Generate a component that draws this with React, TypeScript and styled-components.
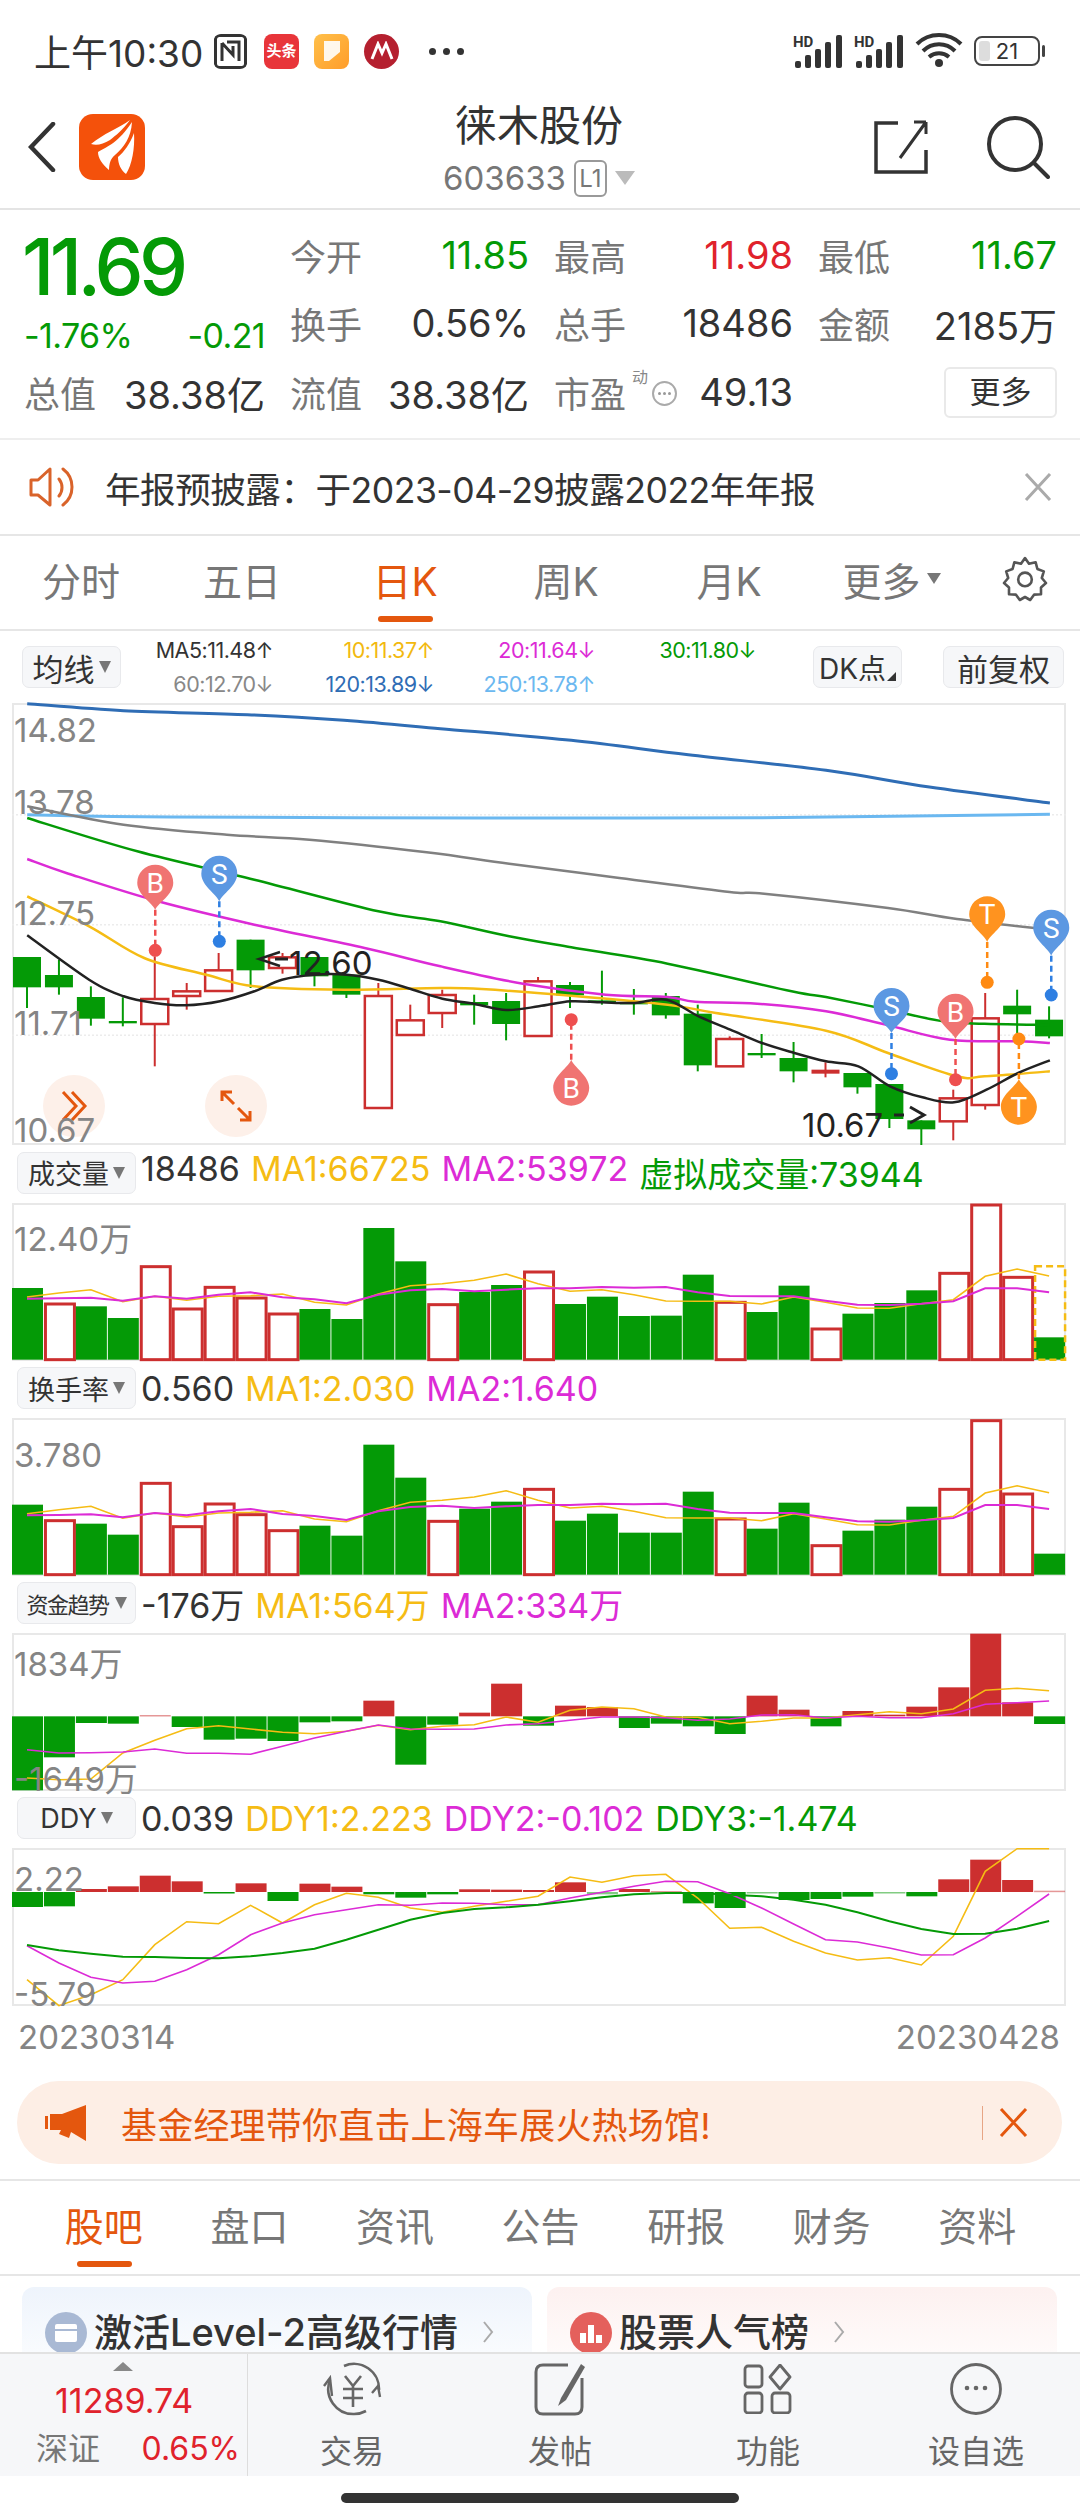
import React from "react";
import styled, { createGlobalStyle } from "styled-components";

const GREEN = "#049a06";
const RED = "#cc2f2f";
const YELLOW = "#f5bc14";
const MAGENTA = "#dc2bd6";
const ORANGE = "#e4570e";
const FONT = `Inter, "Noto Sans CJK SC", sans-serif`;

const GlobalStyle = createGlobalStyle`
  html, body { margin: 0; padding: 0; background: #fff; }
  * { box-sizing: border-box; }
  body { font-family: ${FONT}; color: #333; }
`;

const Page = styled.div`
  width: 1080px;
  height: 2520px;
  overflow: hidden;
  background: #fff;
`;

/* status bar */
const StatusBar = styled.div`
  height: 100px;
  padding: 2px 40px 0 34px;
  display: flex;
  align-items: center;
  justify-content: space-between;
`;
const StatusLeft = styled.div`
  display: flex;
  align-items: center;
`;
const Clock = styled.span`
  font-size: 37px;
  color: #333;
  width: 179px;
  white-space: nowrap;
`;
const AppBadge = styled.div<{ $bg: string; $round?: boolean; $gap?: number }>`
  width: 35px;
  height: 35px;
  margin-right: ${(p) => p.$gap ?? 15}px;
  border-radius: ${(p) => (p.$round ? "50%" : "8px")};
  background: ${(p) => p.$bg};
  color: #fff;
  display: flex;
  align-items: center;
  justify-content: center;
  font-size: 15px;
  font-weight: 700;
  line-height: 14px;
  text-align: center;
  overflow: hidden;
`;
const StatusDots = styled.span`
  display: flex;
  gap: 7px;
  margin-left: 15px;
  i {
    width: 7px;
    height: 7px;
    border-radius: 50%;
    background: #333;
  }
`;
const StatusRight = styled.div`
  display: flex;
  align-items: center;
  gap: 11px;
`;
const Battery = styled.div`
  width: 66px;
  height: 30px;
  border: 2px solid #444;
  border-radius: 8px;
  font-size: 22px;
  line-height: 26px;
  text-align: center;
  color: #333;
  position: relative;
  &::before {
    content: "";
    position: absolute;
    left: 3px;
    top: 3px;
    bottom: 3px;
    width: 11px;
    border-radius: 3px;
    background: #ddd;
  }
  &::after {
    content: "";
    position: absolute;
    right: -7px;
    top: 7px;
    width: 3px;
    height: 12px;
    border-radius: 2px;
    background: #444;
  }
`;

/* header */
const Header = styled.div`
  height: 110px;
  border-bottom: 2px solid #e4e4e4;
  display: grid;
  grid-template-columns: 1fr auto 1fr;
  padding: 0 30px 0 28px;
`;
const HeaderLeft = styled.div`
  display: flex;
  align-items: center;
  gap: 23px;
  padding-bottom: 14px;
`;
const AppLogo = styled.div`
  width: 66px;
  height: 66px;
  border-radius: 14px;
  background: #f4510b;
  display: flex;
  align-items: center;
  justify-content: center;
`;
const HeaderCenter = styled.div`
  text-align: center;
`;
const Title = styled.div`
  font-size: 42px;
  line-height: 52px;
  color: #333;
`;
const CodeRow = styled.div`
  height: 52px;
  display: flex;
  align-items: center;
  justify-content: center;
  font-size: 33px;
  color: #777;
`;
const LevelTag = styled.span`
  width: 33px;
  height: 37px;
  margin: 0 8px 0 8px;
  border: 2px solid #999;
  border-radius: 6px;
  font-size: 24px;
  line-height: 33px;
  text-align: center;
  color: #777;
`;
const HeaderRight = styled.div`
  display: flex;
  align-items: center;
  justify-content: flex-end;
  gap: 58px;
  padding-bottom: 14px;
`;
const Caret = styled.span<{ $w?: number; $h?: number; $c?: string }>`
  display: inline-block;
  flex: none;
  border-left: ${(p) => p.$w ?? 9}px solid transparent;
  border-right: ${(p) => p.$w ?? 9}px solid transparent;
  border-top: ${(p) => p.$h ?? 13}px solid ${(p) => p.$c ?? "#bbb"};
`;

/* quote */
const Quote = styled.div`
  height: 230px;
  padding: 11px 24px 0 24px;
  border-bottom: 2px solid #eee;
  display: grid;
  grid-template-columns: 241px 239px 239px 239px;
  grid-template-rows: 68px 68px 70px;
  column-gap: 25px;
`;
const PriceBlock = styled.div`
  grid-row: 1 / span 2;
  display: flex;
  flex-direction: column;
`;
const Price = styled.div`
  height: 92px;
  font-size: 78px;
  line-height: 92px;
  font-weight: 500;
  letter-spacing: -4.6px;
  margin-left: -2px;
  color: ${GREEN};
`;
const Changes = styled.div`
  display: flex;
  justify-content: space-between;
  font-size: 34px;
  line-height: 46px;
  color: ${GREEN};
  letter-spacing: -0.6px;
`;
const Stat = styled.div<{ $row?: number }>`
  display: flex;
  align-items: center;
  justify-content: space-between;
  font-size: 36px;
  grid-row: ${(p) => p.$row ?? "auto"};
`;
const StatLabel = styled.span`
  color: #777;
  display: flex;
  align-items: center;
  position: relative;
`;
const StatValue = styled.span<{ $c?: string }>`
  font-size: 38px;
  color: ${(p) => p.$c ?? "#333"};
`;
const Sup = styled.span`
  position: absolute;
  left: 78px;
  top: -2px;
  font-size: 16px;
  color: #888;
`;
const MoreDots = styled.span`
  position: absolute;
  left: 98px;
  top: 15px;
  width: 25px;
  height: 25px;
  border: 2px solid #aaa;
  border-radius: 50%;
  display: flex;
  align-items: center;
  justify-content: center;
  gap: 2px;
  i {
    width: 3px;
    height: 3px;
    border-radius: 50%;
    background: #999;
  }
`;
const MoreButton = styled.div`
  justify-self: end;
  align-self: center;
  width: 113px;
  height: 51px;
  border: 2px solid #e9e9e9;
  border-radius: 6px;
  font-size: 31px;
  line-height: 46px;
  text-align: center;
  color: #333;
`;

/* notice */
const Notice = styled.div`
  height: 96px;
  padding: 0 28px 0 29px;
  border-bottom: 2px solid #e6e6e6;
  display: flex;
  align-items: center;
`;
const NoticeText = styled.div`
  flex: 1;
  margin-left: 30px;
  font-size: 35.6px;
  letter-spacing: -0.5px;
  color: #333;
`;

/* tabs */
const Tabs = styled.div`
  height: 95px;
  border-bottom: 2px solid #e6e6e6;
  display: flex;
  align-items: stretch;
`;
const Tab = styled.div<{ $active?: boolean; $w: number }>`
  flex: none;
  width: ${(p) => p.$w}px;
  position: relative;
  display: flex;
  align-items: center;
  justify-content: center;
  gap: 6px;
  padding-bottom: 8px;
  font-size: 39px;
  color: ${(p) => (p.$active ? ORANGE : "#777")};
  &::after {
    content: "";
    display: ${(p) => (p.$active ? "block" : "none")};
    position: absolute;
    left: 50%;
    bottom: 7px;
    width: 55px;
    height: 6px;
    margin-left: -27px;
    border-radius: 3px;
    background: ${ORANGE};
  }
`;
const TabIcon = styled.div`
  flex: 1;
  display: flex;
  align-items: center;
  justify-content: center;
  padding-bottom: 8px;
`;

/* ma legend */
const MaRow = styled.div`
  height: 72px;
  padding: 0 16px 0 22px;
  display: flex;
  align-items: center;
`;
const ToolPill = styled.div<{ $w: number; $h?: number; $fs?: number; $pr?: number }>`
  flex: none;
  position: relative;
  width: ${(p) => p.$w}px;
  height: ${(p) => p.$h ?? 42}px;
  padding-right: ${(p) => p.$pr ?? 0}px;
  background: #f6f7f9;
  border: 1px solid #e8e9ec;
  border-radius: 7px;
  display: flex;
  align-items: center;
  justify-content: center;
  gap: 4px;
  font-size: ${(p) => p.$fs ?? 27}px;
  color: #333;
`;
const CornerMark = styled.span`
  position: absolute;
  right: 5px;
  bottom: 6px;
  border-left: 9px solid transparent;
  border-bottom: 9px solid #333;
`;
const TightLabel = styled.span`
  font-size: 22px;
  letter-spacing: -1.5px;
  margin-right: 2px;
`;
const MaGrid = styled.div`
  width: 640px;
  margin-left: -9px;
  display: grid;
  grid-template-columns: repeat(4, 161px);
  row-gap: 5px;
`;
const MaItem = styled.span<{ $c: string }>`
  text-align: right;
  font-size: 21.5px;
  line-height: 29px;
  letter-spacing: -0.5px;
  white-space: nowrap;
  color: ${(p) => p.$c};
`;
const MaTools = styled.div`
  margin-left: auto;
  display: flex;
  gap: 41px;
`;

/* charts */
const ChartFrame = styled.div<{ $h: number }>`
  position: relative;
  height: ${(p) => p.$h}px;
  margin: 0 14px 0 12px;
  border: 2px solid #e8e8e8;
`;
const ChartSvg = styled.svg`
  position: absolute;
  left: -2px;
  top: -2px;
  overflow: visible;
`;
const AxisLabel = styled.span<{ $top: number }>`
  position: absolute;
  left: 0;
  top: ${(p) => p.$top}px;
  font-size: 33px;
  line-height: 40px;
  color: #858585;
  white-space: nowrap;
`;
const PriceTag = styled.span<{ $left: number; $top: number }>`
  position: absolute;
  left: ${(p) => p.$left}px;
  top: ${(p) => p.$top}px;
  font-size: 33px;
  line-height: 40px;
  color: #222;
`;
const RoundButton = styled.div<{ $left: number }>`
  position: absolute;
  left: ${(p) => p.$left}px;
  top: 370px;
  width: 62px;
  height: 62px;
  border-radius: 50%;
  background: #fdf0e9;
  display: flex;
  align-items: center;
  justify-content: center;
`;
const PaneHead = styled.div<{ $h: number }>`
  height: ${(p) => p.$h}px;
  padding: 0 0 3px 17px;
  display: flex;
  align-items: center;
  font-size: 34px;
  white-space: nowrap;
`;
const PaneValues = styled.div`
  display: flex;
  gap: 11px;
  margin-left: 5px;
`;
const PaneValue = styled.span<{ $c: string }>`
  color: ${(p) => p.$c};
`;
const Dates = styled.div`
  height: 60px;
  padding: 2px 20px 0 18px;
  display: flex;
  align-items: center;
  justify-content: space-between;
  font-size: 33px;
  color: #858585;
`;

/* promo banner */
const BannerWrap = styled.div`
  height: 115px;
  padding: 15px 18px 0 17px;
  border-bottom: 2px solid #e6e6e6;
`;
const Banner = styled.div`
  height: 83px;
  border-radius: 42px;
  background: #fdeee5;
  padding: 0 34px 0 28px;
  display: flex;
  align-items: center;
  color: ${ORANGE};
`;
const BannerText = styled.div`
  flex: 1;
  margin-left: 34px;
  font-size: 36px;
  letter-spacing: 0.2px;
`;
const BannerDivider = styled.span`
  width: 1px;
  height: 34px;
  margin-right: 16px;
  background: #e7a585;
`;

/* lower tabs */
const NewsTabs = styled.div`
  height: 95px;
  padding: 0 31px;
  border-bottom: 2px solid #e6e6e6;
  display: grid;
  grid-template-columns: repeat(7, 145.6px);
`;
const Cards = styled.div`
  height: 76px;
  padding: 11px 23px 0 22px;
  display: grid;
  grid-template-columns: 510px 510px;
  column-gap: 15px;
  overflow: hidden;
`;
const Card = styled.div<{ $from: string }>`
  height: 100px;
  padding: 25px 0 0 23px;
  border-radius: 12px 12px 0 0;
  background: linear-gradient(${(p) => p.$from}, #fff);
  display: flex;
  align-items: flex-start;
  align-self: start;
  font-size: 38px;
  line-height: 40px;
  font-weight: 500;
  color: #333;
  white-space: nowrap;
`;
const CardIcon = styled.div<{ $c: string }>`
  width: 42px;
  height: 42px;
  margin-right: 7px;
  border-radius: 50%;
  background: ${(p) => p.$c};
  display: flex;
  align-items: center;
  justify-content: center;
`;
const CardChevron = styled.span`
  margin: 9px 0 0 24px;
  display: flex;
`;

/* bottom bar */
const BottomBar = styled.div`
  height: 124px;
  border-top: 2px solid #e2e2e2;
  background: #f6f7f9;
  display: grid;
  grid-template-columns: 248px repeat(4, 1fr);
`;
const IndexCell = styled.div`
  border-right: 1px solid #ddd;
  padding: 8px 7px 0 36px;
  display: flex;
  flex-direction: column;
`;
const IndexCaret = styled.span`
  align-self: center;
  margin: 0 0 0 -30px;
  border-left: 10px solid transparent;
  border-right: 10px solid transparent;
  border-bottom: 9px solid #888;
`;
const IndexPrice = styled.span`
  margin-top: 8px;
  padding-left: 19px;
  font-size: 34px;
  line-height: 44px;
  white-space: nowrap;
  color: #e0222c;
`;
const IndexFoot = styled.div`
  margin-top: 4px;
  display: flex;
  justify-content: space-between;
  font-size: 32px;
  line-height: 44px;
  color: #777;
  span:last-child {
    color: #e0222c;
  }
`;
const NavItem = styled.div`
  padding-top: 7px;
  display: flex;
  flex-direction: column;
  align-items: center;
  font-size: 32px;
  color: #666;
`;
const NavIcon = styled.div`
  height: 56px;
  display: flex;
  align-items: center;
  margin-bottom: 9px;
`;
const HomeArea = styled.div`
  height: 44px;
  display: flex;
  align-items: center;
  justify-content: center;
`;
const HomeIndicator = styled.div`
  width: 398px;
  height: 10px;
  border-radius: 5px;
  background: #333;
`;

// zoom-crop coordinates read off the reference -> chart pixels
const zx = (x: number) => (x - 18) / 1.452;
const zy = (y: number, top: number) => (y - top) / 3;
const barX = (i: number) => i * 31.94;
const midX = (i: number) => 15 + i * 31.94;

const smoothPath = (pts: number[][]) => {
  let d = `M${pts[0][0].toFixed(1)} ${pts[0][1].toFixed(1)}`;
  for (let i = 0; i < pts.length - 1; i++) {
    const p0 = pts[Math.max(0, i - 1)];
    const p1 = pts[i];
    const p2 = pts[i + 1];
    const p3 = pts[Math.min(pts.length - 1, i + 2)];
    const c1x = p1[0] + (p2[0] - p0[0]) / 6;
    const c1y = p1[1] + (p2[1] - p0[1]) / 6;
    const c2x = p2[0] - (p3[0] - p1[0]) / 6;
    const c2y = p2[1] - (p3[1] - p1[1]) / 6;
    d += ` C${c1x.toFixed(1)} ${c1y.toFixed(1)} ${c2x.toFixed(1)} ${c2y.toFixed(1)} ${p2[0].toFixed(1)} ${p2[1].toFixed(1)}`;
  }
  return d;
};

const MAIN_TOP = 10;
const mainLines: { c: string; w: number; pts: number[][] }[] = [
  { c: "#2f6db5", w: 3, pts: [[40, 12], [180, 33], [360, 45], [500, 62], [640, 87], [830, 122], [1000, 165], [1200, 212], [1350, 262], [1525, 310]] },
  { c: "#6bb8f0", w: 3, pts: [[40, 345], [250, 352], [700, 355], [1100, 354], [1525, 344]] },
  { c: "#808080", w: 2.5, pts: [[40, 320], [180, 375], [330, 405], [450, 420], [620, 458], [740, 492], [900, 535], [1060, 577], [1110, 582], [1290, 625], [1390, 658], [1525, 690]] },
  { c: GREEN, w: 2.5, pts: [[40, 355], [200, 455], [370, 540], [550, 635], [640, 665], [740, 710], [830, 743], [970, 792], [1150, 875], [1200, 892], [1290, 930], [1370, 965], [1430, 972], [1525, 976]] },
  { c: MAGENTA, w: 2.5, pts: [[40, 478], [100, 522], [230, 605], [370, 675], [530, 745], [640, 800], [760, 852], [880, 885], [970, 892], [1010, 906], [1100, 912], [1200, 935], [1290, 977], [1380, 1020], [1480, 1025], [1525, 1030]] },
  { c: YELLOW, w: 2.5, pts: [[40, 590], [130, 680], [210, 775], [300, 825], [370, 860], [500, 870], [640, 865], [700, 868], [830, 888], [970, 915], [1040, 940], [1200, 993], [1290, 1060], [1390, 1130], [1430, 1130], [1525, 1115]] },
  { c: "#222", w: 2.5, pts: [[40, 707], [130, 840], [180, 890], [225, 910], [270, 917], [320, 905], [370, 875], [410, 840], [458, 825], [504, 825], [550, 840], [597, 868], [643, 897], [690, 913], [736, 931], [783, 920], [829, 905], [875, 908], [922, 910], [968, 900], [1015, 950], [1061, 990], [1107, 1030], [1154, 1060], [1200, 1085], [1247, 1100], [1293, 1160], [1340, 1193], [1386, 1208], [1433, 1170], [1479, 1120], [1525, 1082]] },
];

// [up, box top, box bottom, wick top, wick bottom, solid]
const candles: [number, number, number, number, number, number?][] = [
  [0, 772, 863, 772, 925], [0, 826, 863, 780, 885], [0, 892, 957, 860, 978], [0, 964, 971, 893, 980],
  [1, 898, 973, 770, 1100], [1, 875, 889, 850, 930], [1, 812, 874, 760, 875], [0, 720, 812, 720, 865],
  [1, 773, 805, 760, 822], [0, 772, 830, 772, 860], [0, 825, 885, 825, 895], [1, 889, 1225, 850, 1225],
  [1, 962, 1006, 915, 1006], [1, 886, 940, 870, 985], [0, 907, 917, 885, 975], [0, 904, 973, 880, 1022],
  [1, 845, 1009, 832, 1009], [0, 856, 887, 847, 925], [0, 902, 910, 813, 915], [0, 908, 914, 868, 945],
  [0, 889, 947, 880, 957], [0, 942, 1097, 915, 1115], [1, 1018, 1100, 1010, 1100], [0, 1060, 1067, 1003, 1075],
  [0, 1075, 1115, 1027, 1148], [1, 1110, 1122, 1088, 1133, 1], [0, 1120, 1163, 1120, 1182], [0, 1153, 1258, 1153, 1285],
  [0, 1262, 1289, 1262, 1336], [1, 1196, 1265, 1170, 1322], [1, 956, 1216, 880, 1230], [0, 918, 944, 870, 1010],
  [0, 960, 1010, 920, 1016],
];

const PIN_COLORS: Record<string, [string, string]> = {
  B: ["#f07472", "#ee4f4f"],
  S: ["#5c98e2", "#2e7fe2"],
  T: ["#ff931f", "#ff8a12"],
};
// [letter, x, head top, tip, dot, points down]
const pins: [string, number, number, number, number, boolean][] = [
  ["B", 226, 495, 630, 752, true],
  ["S", 319, 468, 605, 725, true],
  ["B", 830, 1218, 1080, 960, false],
  ["S", 1295, 865, 1000, 1122, true],
  ["B", 1388, 882, 1018, 1140, true],
  ["T", 1434, 590, 727, 848, true],
  ["S", 1527, 630, 768, 886, true],
  ["T", 1480, 1275, 1138, 1018, false],
];

const Pin = ({ pin }: { pin: (typeof pins)[number] }) => {
  const [letter, x0, head, tip, dot, down] = pin;
  const [fill, dotFill] = PIN_COLORS[letter];
  const x = zx(x0);
  const tipY = zy(tip, MAIN_TOP);
  const dotY = zy(dot, MAIN_TOP);
  const cy = down ? zy(head, MAIN_TOP) + 18 : zy(head, MAIN_TOP) - 18;
  const s = down ? 1 : -1;
  return (
    <g>
      <line x1={x} x2={x} y1={tipY} y2={dotY} stroke={dotFill} strokeWidth={2.5} strokeDasharray="6 4" />
      <circle cx={x} cy={dotY} r={6.5} fill={dotFill} />
      <path
        d={`M${x} ${tipY} C${x - 3} ${cy + s * 20} ${x - 18} ${cy + s * 12} ${x - 18} ${cy} A18 18 0 0 ${down ? 1 : 0} ${x + 18} ${cy} C${x + 18} ${cy + s * 12} ${x + 3} ${cy + s * 20} ${x} ${tipY}Z`}
        fill={fill}
      />
      <text x={x} y={cy + 10} textAnchor="middle" fontSize={28} fontFamily="Roboto, sans-serif" fontWeight={400} fill="#fff">
        {letter}
      </text>
    </g>
  );
};

const MainChart = () => (
  <ChartSvg width={1054} height={442}>
    {[345, 675, 1007].map((y) => (
      <line key={y} x1={0} x2={1054} y1={zy(y, MAIN_TOP)} y2={zy(y, MAIN_TOP)} stroke="#ececec" strokeWidth={1.5} strokeDasharray="2 2" />
    ))}
    {candles.map(([up, t, b, wt, wb, solid], i) => {
      const c = up ? RED : GREEN;
      const x = midX(i);
      const top = zy(t, MAIN_TOP);
      const bot = zy(b, MAIN_TOP);
      return (
        <g key={i}>
          <line x1={x} x2={x} y1={zy(wt, MAIN_TOP)} y2={zy(wb, MAIN_TOP)} stroke={c} strokeWidth={2} />
          {up && !solid ? (
            <rect x={x - 13.5} y={top} width={27} height={bot - top} fill="#fff" stroke={c} strokeWidth={2.5} />
          ) : (
            <rect x={x - 14} y={top} width={28} height={bot - top} fill={c} />
          )}
        </g>
      );
    })}
    {mainLines.map((l) => (
      <path
        key={l.c}
        d={smoothPath(l.pts.map(([x, y]) => [zx(x), zy(y, MAIN_TOP)]))}
        fill="none"
        stroke={l.c}
        strokeWidth={l.w}
      />
    ))}
    {pins.map((p) => (
      <Pin key={`${p[0]}${p[1]}`} pin={p} />
    ))}
    <path d="M268 249 L247 256 L268 263" fill="none" stroke="#222" strokeWidth={2.5} />
    <path d="M263 256 H276" stroke="#222" strokeWidth={3} />
    <path d="M882 412 H892 M898 404 L912 412 L898 420" fill="none" stroke="#222" strokeWidth={3} />
  </ChartSvg>
);

const volTops: [number, number][] = [
  [0, 385], [1, 430], [0, 440], [0, 475], [1, 318], [1, 445], [1, 380], [1, 412], [1, 460], [0, 448], [0, 478],
  [0, 205], [0, 305], [1, 432], [0, 397], [0, 376], [1, 334], [0, 433], [0, 411], [0, 469], [0, 468], [0, 345],
  [1, 425], [0, 457], [0, 378], [1, 505], [0, 462], [0, 430], [0, 392], [1, 338], [1, 133], [1, 350], [0, 533],
];
const turnoverTops = [
  1035, 1080, 1092, 1125, 968, 1098, 1030, 1062, 1110, 1098, 1128, 855, 954, 1082, 1047, 1026, 986, 1083, 1062,
  1119, 1119, 996, 1075, 1107, 1029, 1155, 1113, 1080, 1041, 986, 780, 1000, 1182,
];
const volMa1 = [412, 400, 390, 426, 410, 422, 410, 408, 403, 428, 436, 403, 378, 372, 362, 343, 372, 395, 390, 405, 424, 425, 425, 433, 412, 428, 445, 446, 432, 420, 350, 328, 349];
const volMa2 = [417, 416, 414, 423, 410, 417, 405, 398, 413, 419, 431, 405, 392, 388, 395, 390, 386, 386, 382, 384, 382, 398, 409, 410, 410, 423, 435, 436, 432, 425, 386, 386, 398];

// signed bars: far end as crop y
const flowEnds = [
  602, 503, 400, 402, 376, 412, 450, 447, 454, 398, 395, 333, 525, 405, 369, 282, 408, 348, 352, 415, 402, 410,
  433, 318, 360, 410, 364, 375, 351, 293, 132, 338, 403,
];
const flowMa1 = [565, 570, 568, 490, 452, 417, 408, 418, 428, 432, 425, 407, 420, 410, 405, 382, 398, 362, 352, 357, 382, 383, 402, 395, 385, 385, 375, 366, 372, 358, 302, 296, 303];
const flowMa2 = [480, 490, 489, 487, 478, 491, 491, 494, 470, 445, 425, 406, 418, 419, 418, 406, 402, 392, 382, 382, 384, 392, 388, 376, 375, 385, 380, 384, 384, 372, 344, 339, 334];

const ddyEnds = [
  952, 950, 898, 890, 858, 875, 911, 881, 934, 882, 891, 914, 924, 914, 899, 900, 901, 878, 914, 898, 904, 941,
  955, 910, 931, 928, 921, 910, 920, 869, 810, 871, 903,
];
const ddy1 = [1170, 1248, 1215, 1170, 1065, 996, 1002, 947, 1000, 945, 911, 923, 955, 968, 950, 935, 920, 862, 878, 858, 854, 925, 1016, 1013, 1055, 1090, 1111, 1104, 1126, 1040, 845, 777, 777];
const ddy2 = [1068, 1120, 1163, 1180, 1175, 1140, 1095, 1035, 1000, 975, 960, 945, 947, 940, 941, 945, 945, 925, 908, 890, 875, 876, 912, 955, 1003, 1050, 1057, 1075, 1096, 1095, 1045, 980, 913];
const ddy3 = [1066, 1082, 1092, 1101, 1102, 1105, 1106, 1100, 1090, 1077, 1050, 1020, 990, 970, 958, 953, 945, 935, 923, 914, 910, 910, 915, 920, 930, 945, 968, 995, 1018, 1033, 1032, 1017, 994];

const SubLine = ({ ys, top, c, w = 1.6 }: { ys: number[]; top: number; c: string; w?: number }) => (
  <polyline
    points={ys.map((y, i) => `${midX(i).toFixed(1)},${zy(y, top).toFixed(1)}`).join(" ")}
    fill="none"
    stroke={c}
    strokeWidth={w}
  />
);

const VolumeChart = ({ tops, top, bottom, shift, ghost }: { tops: number[]; top: number; bottom: number; shift: number; ghost?: boolean }) => (
  <ChartSvg width={1054} height={158}>
    {tops.map((t, i) => {
      const y = zy(t, top);
      const b = zy(bottom, top);
      return volTops[i][0] ? (
        <rect key={i} x={barX(i) + 1.5} y={y + 1} width={29} height={b - y - 1} fill="#fff" stroke={RED} strokeWidth={3} />
      ) : (
        <rect key={i} x={barX(i)} y={y} width={31} height={b - y} fill={GREEN} />
      );
    })}
    {ghost && (
      <rect x={barX(32) + 1} y={zy(320, top)} width={30} height={zy(bottom, top) - zy(320, top)} fill="none" stroke={YELLOW} strokeWidth={2.5} strokeDasharray="7 4" />
    )}
    <SubLine ys={volMa1.map((y) => y + shift)} top={top} c={YELLOW} />
    <SubLine ys={volMa2.map((y) => y + shift)} top={top} c={MAGENTA} w={2} />
  </ChartSvg>
);

const SignedBars = ({ ends, zero, top, light }: { ends: number[]; zero: number; top: number; light: number[] }) => (
  <>
    {ends.map((e, i) => {
      const y0 = zy(Math.min(e, zero), top);
      const y1 = zy(Math.max(e, zero), top);
      const faded = light.includes(i);
      return (
        <rect key={i} x={barX(i)} y={y0} width={31} height={Math.max(y1 - y0, 1.5)} fill={e < zero ? RED : GREEN} opacity={faded ? 0.5 : 1} />
      );
    })}
  </>
);

const Triangle = () => <Caret $w={6} $h={12} $c="#777" />;

const BackIcon = () => (
  <svg width="28" height="50" viewBox="0 0 28 50">
    <path d="M25 2 L3 25 L25 48" fill="none" stroke="#333" strokeWidth="4.5" strokeLinecap="round" />
  </svg>
);
const WingLogo = () => (
  <svg width="46" height="54" viewBox="0 0 46 54">
    <path d="M2 24 C14 14 30 8 41 0 C33 11 27 15 21 20 C14 24 8 26 2 24Z M9 32 C18 27 30 22 43 2 C42 18 35 27 26 35 C22 38 20 43 20 50 C13 44 9 38 9 32Z M29 37 C35 32 41 24 45 13 C46 28 43 45 37 54 C32 50 29 44 29 37Z" fill="#fff" />
  </svg>
);
const ShareIcon = () => (
  <svg width="54" height="54" viewBox="0 0 54 54" fill="none" stroke="#333" strokeWidth="3.5">
    <path d="M24 3 H2 V52 H52 V30" />
    <path d="M52 2 V14 M52 2 H40 M52 2 L26 38" strokeWidth="3" />
  </svg>
);
const SearchIcon = () => (
  <svg width="64" height="64" viewBox="0 0 64 64" fill="none" stroke="#333" strokeWidth="4">
    <ellipse cx="29" cy="29" rx="26" ry="26" />
    <path d="M48 48 L62 62" strokeLinecap="round" />
  </svg>
);
const NfcIcon = () => (
  <svg width="33" height="35" viewBox="0 0 33 35" fill="none" stroke="#333" strokeWidth="3">
    <rect x="1.5" y="1.5" width="30" height="32" rx="4" />
    <path d="M8 9 V27 M8 9 L19 21 V12 M13 8 H25 V27" />
  </svg>
);
const HdSignal = () => (
  <svg width="50" height="35" viewBox="0 0 50 35">
    <text x="0" y="13" fontSize="15" fontWeight="700" fontFamily="Roboto, sans-serif" fill="#333">HD</text>
    {[[2, 7], [12, 13], [22, 19], [32, 26], [43, 33]].map(([x, h]) => (
      <rect key={x} x={x} y={34 - h} width="6" height={h} rx="2" fill="#333" />
    ))}
  </svg>
);
const WifiIcon = () => (
  <svg width="48" height="36" viewBox="0 0 48 36" fill="none" stroke="#333" strokeWidth="4">
    <path d="M2 11 C14 -1 34 -1 46 11 M8 18 C17 9 31 9 40 18 M14 24 C20 19 28 19 34 24" />
    <circle cx="24" cy="30" r="4" fill="#333" stroke="none" />
  </svg>
);
const SpeakerIcon = () => (
  <svg width="46" height="40" viewBox="0 0 46 40" fill="none" stroke="#d9632a" strokeWidth="3">
    <path d="M2 13 H9 L21 2 V38 L9 28 H2 Z" strokeLinejoin="round" />
    <path d="M30 12 C34 17 34 24 30 29 M34 2 C46 11 46 29 34 38" strokeLinecap="round" />
  </svg>
);
const CloseIcon = ({ c = "#aaa", w = 28, h = 28 }: { c?: string; w?: number; h?: number }) => (
  <svg width={w} height={h} viewBox={`0 0 ${w} ${h}`} fill="none" stroke={c} strokeWidth="3">
    <path d={`M2 1 L${w - 2} ${h - 1} M${w - 2} 1 L2 ${h - 1}`} />
  </svg>
);
const GearIcon = () => (
  <svg width="48" height="48" viewBox="0 0 24 24" fill="none" stroke="#555" strokeWidth="1.3" strokeLinejoin="round">
    <path d="M12 1.5 L14 4.4 L17.3 3.6 L18.2 7 L21.4 8.2 L20.4 11.5 L22.5 14 L20 16.2 L20 19.6 L16.6 19.8 L14.6 22.5 L12 21 L9.4 22.5 L7.4 19.8 L4 19.6 L4 16.2 L1.5 14 L3.6 11.5 L2.6 8.2 L5.8 7 L6.7 3.6 L10 4.4 Z" />
    <circle cx="12" cy="12.2" r="3.4" />
  </svg>
);
const HornIcon = () => (
  <svg width="42" height="36" viewBox="0 0 42 36" fill={ORANGE}>
    <path d="M0 11 H3 V24 H0 Z M5 9 H17 L41 0 V36 L26 27 L24 33 L14 29 L16 25 H5 Z" />
  </svg>
);
const ChevronsIcon = () => (
  <svg width="28" height="30" viewBox="0 0 28 30" fill="none" stroke={ORANGE} strokeWidth="3">
    <path d="M3 1 L16 15 L3 29 M12 1 L25 15 L12 29" />
  </svg>
);
const ExpandIcon = () => (
  <svg width="32" height="32" viewBox="0 0 32 32" fill="none" stroke={ORANGE} strokeWidth="3">
    <path d="M2 11 V2 H12 M2 2 L14 14 M30 21 V30 H20 M30 30 L18 18" />
  </svg>
);
const TradeIcon = () => (
  <svg width="60" height="54" viewBox="0 0 60 54" fill="none" stroke="#666" strokeWidth="2.6">
    <path d="M8 18 A25 25 0 0 0 32 52 A25 25 0 0 0 44 49 M22 4 A25 25 0 0 1 57 28" />
    <path d="M2 24 L8 16 L10 34 M58 35 L56 24 L50 31" strokeWidth="2.4" />
    <path d="M23 14 L31 24 L39 14 M21 27 H41 M21 36 H41 M31 24 V45" />
  </svg>
);
const PostIcon = () => (
  <svg width="52" height="54" viewBox="0 0 52 54" fill="none" stroke="#666" strokeWidth="3">
    <path d="M34 3 H9 Q2 3 2 10 V45 Q2 52 9 52 H41 Q48 52 48 45 V16" />
    <path d="M47 2 L27 36 L24 44 L32 38 L51 5 Z" fill="#666" stroke="none" />
  </svg>
);
const AppsIcon = () => (
  <svg width="50" height="50" viewBox="0 0 50 50" fill="none" stroke="#666" strokeWidth="2.8">
    <rect x="2" y="2" width="17" height="21" rx="3" />
    <rect x="2" y="29" width="17" height="20" rx="3" />
    <rect x="29" y="29" width="18" height="20" rx="3" />
    <path d="M37 1 L47 13 L37 25 L27 13 Z" strokeLinejoin="round" />
  </svg>
);
const CircleDotsIcon = () => (
  <svg width="52" height="52" viewBox="0 0 52 52" fill="none">
    <circle cx="26" cy="26" r="24.5" stroke="#666" strokeWidth="2.8" />
    {[17, 26, 35].map((x) => (
      <circle key={x} cx={x} cy="25" r="2.3" fill="#666" />
    ))}
  </svg>
);
const ThinChevron = () => (
  <svg width="12" height="22" viewBox="0 0 12 22" fill="none" stroke="#aaa" strokeWidth="2">
    <path d="M2 1 L10 11 L2 21" />
  </svg>
);

const maItems = [
  ["MA5:11.48↑", "#333"],
  ["10:11.37↑", "#f2b90f"],
  ["20:11.64↓", MAGENTA],
  ["30:11.80↓", GREEN],
  ["60:12.70↓", "#888"],
  ["120:13.89↓", "#2f6db5"],
  ["250:13.78↑", "#6bb8f0"],
];

const stats = [
  ["今开", "11.85", GREEN],
  ["最高", "11.98", "#e0222c"],
  ["最低", "11.67", GREEN],
  ["换手", "0.56%", "#333"],
  ["总手", "18486", "#333"],
  ["金额", "2185万", "#333"],
];

const Head = ({ label, values, h = 57 }: { label: React.ReactNode; values: [string, string][]; h?: number }) => (
  <PaneHead $h={h}>
    <ToolPill $w={119}>
      {label}
      <Triangle />
    </ToolPill>
    <PaneValues>
      {values.map(([t, c]) => (
        <PaneValue key={t} $c={c}>
          {t}
        </PaneValue>
      ))}
    </PaneValues>
  </PaneHead>
);

export default function App() {
  return (
    <Page>
      <GlobalStyle />
      <StatusBar>
        <StatusLeft>
          <Clock>上午10:30</Clock>
          <AppBadge $bg="transparent" $gap={16}>
            <NfcIcon />
          </AppBadge>
          <AppBadge $bg="#e8353a">头条</AppBadge>
          <AppBadge $bg="linear-gradient(135deg,#ffc04a,#ff9d2a)">
            <svg width="20" height="22" viewBox="0 0 20 22">
              <path d="M2 1 H18 V12 L7 21 H2Z" fill="#fff" opacity=".9" />
            </svg>
          </AppBadge>
          <AppBadge $bg="#b5202f" $round>
            <svg width="24" height="20" viewBox="0 0 24 20" fill="none" stroke="#fff" strokeWidth="3">
              <path d="M2 18 L8 3 L12 12 L16 3 L22 18" />
            </svg>
          </AppBadge>
          <StatusDots>
            <i />
            <i />
            <i />
          </StatusDots>
        </StatusLeft>
        <StatusRight>
          <HdSignal />
          <HdSignal />
          <WifiIcon />
          <Battery>21</Battery>
        </StatusRight>
      </StatusBar>

      <Header>
        <HeaderLeft>
          <BackIcon />
          <AppLogo>
            <WingLogo />
          </AppLogo>
        </HeaderLeft>
        <HeaderCenter>
          <Title>徕木股份</Title>
          <CodeRow>
            603633
            <LevelTag>L1</LevelTag>
            <Caret $w={10} $h={14} />
          </CodeRow>
        </HeaderCenter>
        <HeaderRight>
          <ShareIcon />
          <SearchIcon />
        </HeaderRight>
      </Header>

      <Quote>
        <PriceBlock>
          <Price>11.69</Price>
          <Changes>
            <span>-1.76%</span>
            <span>-0.21</span>
          </Changes>
        </PriceBlock>
        {stats.slice(0, 3).map(([k, v, c]) => (
          <Stat key={k}>
            <StatLabel>{k}</StatLabel>
            <StatValue $c={c}>{v}</StatValue>
          </Stat>
        ))}
        {stats.slice(3).map(([k, v, c]) => (
          <Stat key={k} $row={2}>
            <StatLabel>{k}</StatLabel>
            <StatValue $c={c}>{v}</StatValue>
          </Stat>
        ))}
        <Stat>
          <StatLabel>总值</StatLabel>
          <StatValue>38.38亿</StatValue>
        </Stat>
        <Stat>
          <StatLabel>流值</StatLabel>
          <StatValue>38.38亿</StatValue>
        </Stat>
        <Stat>
          <StatLabel>
            市盈
            <Sup>动</Sup>
            <MoreDots>
              <i />
              <i />
              <i />
            </MoreDots>
          </StatLabel>
          <StatValue>49.13</StatValue>
        </Stat>
        <MoreButton>更多</MoreButton>
      </Quote>

      <Notice>
        <SpeakerIcon />
        <NoticeText>年报预披露：于2023-04-29披露2022年年报</NoticeText>
        <CloseIcon />
      </Notice>

      <Tabs>
        <Tab $w={162}>分时</Tab>
        <Tab $w={160}>五日</Tab>
        <Tab $w={166} $active>
          日K
        </Tab>
        <Tab $w={156}>周K</Tab>
        <Tab $w={170}>月K</Tab>
        <Tab $w={155}>
          更多
          <Caret $w={7} $h={11} $c="#777" />
        </Tab>
        <TabIcon>
          <GearIcon />
        </TabIcon>
      </Tabs>

      <MaRow>
        <ToolPill $w={99} $fs={31}>
          均线
          <Triangle />
        </ToolPill>
        <MaGrid>
          {maItems.map(([t, c]) => (
            <MaItem key={t} $c={c}>
              {t}
            </MaItem>
          ))}
        </MaGrid>
        <MaTools>
          <ToolPill $w={89} $fs={28} $pr={10}>
            DK点
            <CornerMark />
          </ToolPill>
          <ToolPill $w={121} $fs={31}>前复权</ToolPill>
        </MaTools>
      </MaRow>

      <ChartFrame $h={442}>
        <MainChart />
        <RoundButton $left={29}>
          <ChevronsIcon />
        </RoundButton>
        <RoundButton $left={191}>
          <ExpandIcon />
        </RoundButton>
        <AxisLabel $top={5}>14.82</AxisLabel>
        <AxisLabel $top={77}>13.78</AxisLabel>
        <AxisLabel $top={188}>12.75</AxisLabel>
        <AxisLabel $top={298}>11.71</AxisLabel>
        <AxisLabel $top={405}>10.67</AxisLabel>
        <PriceTag $left={275} $top={238}>12.60</PriceTag>
        <PriceTag $left={788} $top={400}>10.67</PriceTag>
      </ChartFrame>

      <Head
        h={58}
        label="成交量"
        values={[
          ["18486", "#333"],
          ["MA1:66725", YELLOW],
          ["MA2:53972", MAGENTA],
          ["虚拟成交量:73944", GREEN],
        ]}
      />
      <ChartFrame $h={158}>
        <VolumeChart tops={volTops.map((v) => v[1])} top={130} bottom={600} shift={0} ghost />
        <AxisLabel $top={14}>12.40万</AxisLabel>
      </ChartFrame>

      <Head
        label="换手率"
        values={[
          ["0.560", "#333"],
          ["MA1:2.030", YELLOW],
          ["MA2:1.640", MAGENTA],
        ]}
      />
      <ChartFrame $h={158}>
        <VolumeChart tops={turnoverTops} top={775} bottom={1245} shift={650} />
        <AxisLabel $top={15}>3.780</AxisLabel>
      </ChartFrame>

      <Head
        label={<TightLabel>资金趋势</TightLabel>}
        values={[
          ["-176万", "#333"],
          ["MA1:564万", YELLOW],
          ["MA2:334万", MAGENTA],
        ]}
      />
      <ChartFrame $h={158}>
        <ChartSvg width={1054} height={158}>
          <SignedBars ends={flowEnds} zero={380} top={130} light={[4]} />
          <SubLine ys={flowMa1} top={130} c={YELLOW} />
          <SubLine ys={flowMa2} top={130} c={MAGENTA} />
        </ChartSvg>
        <AxisLabel $top={9}>1834万</AxisLabel>
        <AxisLabel $top={124}>-1649万</AxisLabel>
      </ChartFrame>

      <Head
        label="DDY"
        values={[
          ["0.039", "#333"],
          ["DDY1:2.223", YELLOW],
          ["DDY2:-0.102", MAGENTA],
          ["DDY3:-1.474", GREEN],
        ]}
      />
      <ChartFrame $h={158}>
        <ChartSvg width={1054} height={158}>
          <SignedBars ends={ddyEnds} zero={907} top={775} light={[18, 20, 23, 27, 32]} />
          <SubLine ys={ddy1} top={775} c={YELLOW} />
          <SubLine ys={ddy2} top={775} c={MAGENTA} />
          <SubLine ys={ddy3} top={775} c={GREEN} w={2} />
        </ChartSvg>
        <AxisLabel $top={9}>2.22</AxisLabel>
        <AxisLabel $top={124}>-5.79</AxisLabel>
      </ChartFrame>

      <Dates>
        <span>20230314</span>
        <span>20230428</span>
      </Dates>

      <BannerWrap>
        <Banner>
          <HornIcon />
          <BannerText>基金经理带你直击上海车展火热场馆!</BannerText>
          <BannerDivider />
          <CloseIcon c={ORANGE} w={29} h={29} />
        </Banner>
      </BannerWrap>

      <NewsTabs>
        <Tab $w={145.6} $active>股吧</Tab>
        <Tab $w={145.6}>盘口</Tab>
        <Tab $w={145.6}>资讯</Tab>
        <Tab $w={145.6}>公告</Tab>
        <Tab $w={145.6}>研报</Tab>
        <Tab $w={145.6}>财务</Tab>
        <Tab $w={145.6}>资料</Tab>
      </NewsTabs>

      <Cards>
        <Card $from="#eef4fc">
          <CardIcon $c="#a9b9d4">
            <svg width="24" height="24" viewBox="0 0 24 24">
              <rect x="1" y="3" width="22" height="18" rx="2" fill="#fff" />
              <rect x="1" y="8" width="22" height="2" fill="#a9b9d4" />
            </svg>
          </CardIcon>
          激活Level-2高级行情
          <CardChevron>
            <ThinChevron />
          </CardChevron>
        </Card>
        <Card $from="#fdf1f0">
          <CardIcon $c="#e4605c">
            <svg width="24" height="22" viewBox="0 0 24 22" fill="#fff">
              <rect x="1" y="11" width="6" height="10" />
              <rect x="9" y="3" width="6" height="18" />
              <rect x="17" y="13" width="6" height="8" />
            </svg>
          </CardIcon>
          股票人气榜
          <CardChevron>
            <ThinChevron />
          </CardChevron>
        </Card>
      </Cards>

      <BottomBar>
        <IndexCell>
          <IndexCaret />
          <IndexPrice>11289.74</IndexPrice>
          <IndexFoot>
            <span>深证</span>
            <span>0.65%</span>
          </IndexFoot>
        </IndexCell>
        <NavItem>
          <NavIcon>
            <TradeIcon />
          </NavIcon>
          交易
        </NavItem>
        <NavItem>
          <NavIcon>
            <PostIcon />
          </NavIcon>
          发帖
        </NavItem>
        <NavItem>
          <NavIcon>
            <AppsIcon />
          </NavIcon>
          功能
        </NavItem>
        <NavItem>
          <NavIcon>
            <CircleDotsIcon />
          </NavIcon>
          设自选
        </NavItem>
      </BottomBar>

      <HomeArea>
        <HomeIndicator />
      </HomeArea>
    </Page>
  );
}
